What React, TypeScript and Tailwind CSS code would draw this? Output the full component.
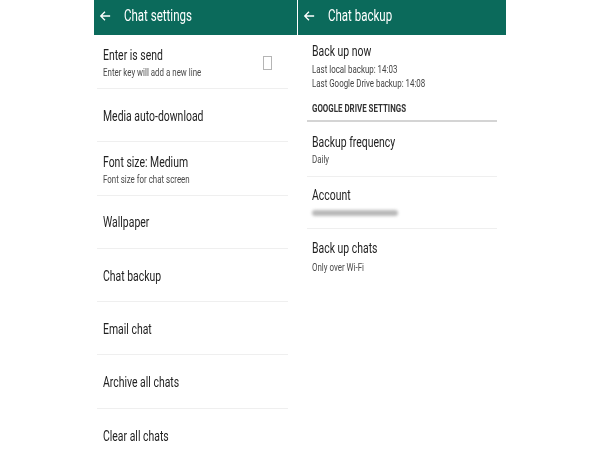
import React from "react";

// narrow text, the screenshot is squeezed horizontally
function T({ children, className = "" }: { children: React.ReactNode; className?: string }) {
  return (
    <span className={`inline-block origin-left scale-x-[0.72] whitespace-nowrap ${className}`}>
      {children}
    </span>
  );
}

function Arrow() {
  return (
    <svg width="12" height="12" viewBox="0 0 24 24" fill="none" stroke="white" strokeWidth="2.6" strokeLinecap="square">
      <path d="M21 12H4M11 4.5 3.5 12l7.5 7.5" />
    </svg>
  );
}

function Header({ title }: { title: string }) {
  return (
    <div className="h-[35px] bg-[#0b6a5b] flex items-center pl-[5px] pb-[4px] gap-[13px]">
      <Arrow />
      <T className="text-[16px] text-white">{title}</T>
    </div>
  );
}

function Row({ title, sub, check, first }: { title: string; sub?: string; check?: boolean; first?: boolean }) {
  return (
    <div
      className={`${first ? "h-[54px]" : "h-[53.3px]"} ml-[3px] mr-[9px] border-b border-[#efefef] flex items-center pl-[6px] pr-[16px] pt-[4px]`}
    >
      <div className="flex-1 flex flex-col leading-none">
        <T className="text-[14.5px] text-[#222]">{title}</T>
        {sub && <T className="text-[11px] text-[#4a4a4a] mt-[4px]">{sub}</T>}
      </div>
      {check && <div className="w-[9px] h-[14px] border border-[#b5b5b5] -mt-[2px]" />}
    </div>
  );
}

const left: { title: string; sub?: string; check?: boolean }[] = [
  { title: "Enter is send", sub: "Enter key will add a new line", check: true },
  { title: "Media auto-download" },
  { title: "Font size: Medium", sub: "Font size for chat screen" },
  { title: "Wallpaper" },
  { title: "Chat backup" },
  { title: "Email chat" },
  { title: "Archive all chats" },
  { title: "Clear all chats" },
];

export default function App() {
  return (
    <div className="w-[600px] h-[450px] overflow-hidden bg-white flex pl-[94px] font-['Roboto',sans-serif]">
      {/* left: chat settings */}
      <div className="w-[203px]">
        <Header title="Chat settings" />
        {left.map((r, i) => (
          <Row key={r.title} {...r} first={i === 0} />
        ))}
      </div>

      {/* right: chat backup */}
      <div className="w-[208px] ml-[1px]">
        <Header title="Chat backup" />
        <div className="pl-[14px] pt-[10px] flex flex-col leading-none">
          <T className="text-[14.5px] text-[#222]">Back up now</T>
          <T className="text-[11px] text-[#444] mt-[4px]">Last local backup: 14:03</T>
          <T className="text-[11px] text-[#444] mt-[3px]">Last Google Drive backup: 14:08</T>
        </div>
        <div className="ml-[9px] mr-[9px] mt-[10px] pl-[5px] pb-[5px] border-b-2 border-[#d4d4d4] leading-none">
          <T className="text-[11px] font-bold text-[#333]">GOOGLE DRIVE SETTINGS</T>
        </div>
        <div className="mx-[9px] h-[55px] border-b border-[#efefef] pl-[5px] pt-[4px] flex flex-col justify-center leading-none">
          <T className="text-[14.5px] text-[#222]">Backup frequency</T>
          <T className="text-[11px] text-[#4a4a4a] mt-[4px]">Daily</T>
        </div>
        <div className="mx-[9px] h-[52px] border-b border-[#efefef] pl-[5px] pt-[1px] flex flex-col justify-center leading-none">
          <T className="text-[14.5px] text-[#222]">Account</T>
          <div className="mt-[7px] w-[86px] h-[6px] bg-[#b9b9b9] rounded-full blur-[1.5px]" />
        </div>
        <div className="mx-[9px] h-[54px] pl-[5px] pt-[4px] flex flex-col justify-center leading-none">
          <T className="text-[14.5px] text-[#222]">Back up chats</T>
          <T className="text-[11px] text-[#4a4a4a] mt-[5px]">Only over Wi-Fi</T>
        </div>
      </div>
    </div>
  );
}
